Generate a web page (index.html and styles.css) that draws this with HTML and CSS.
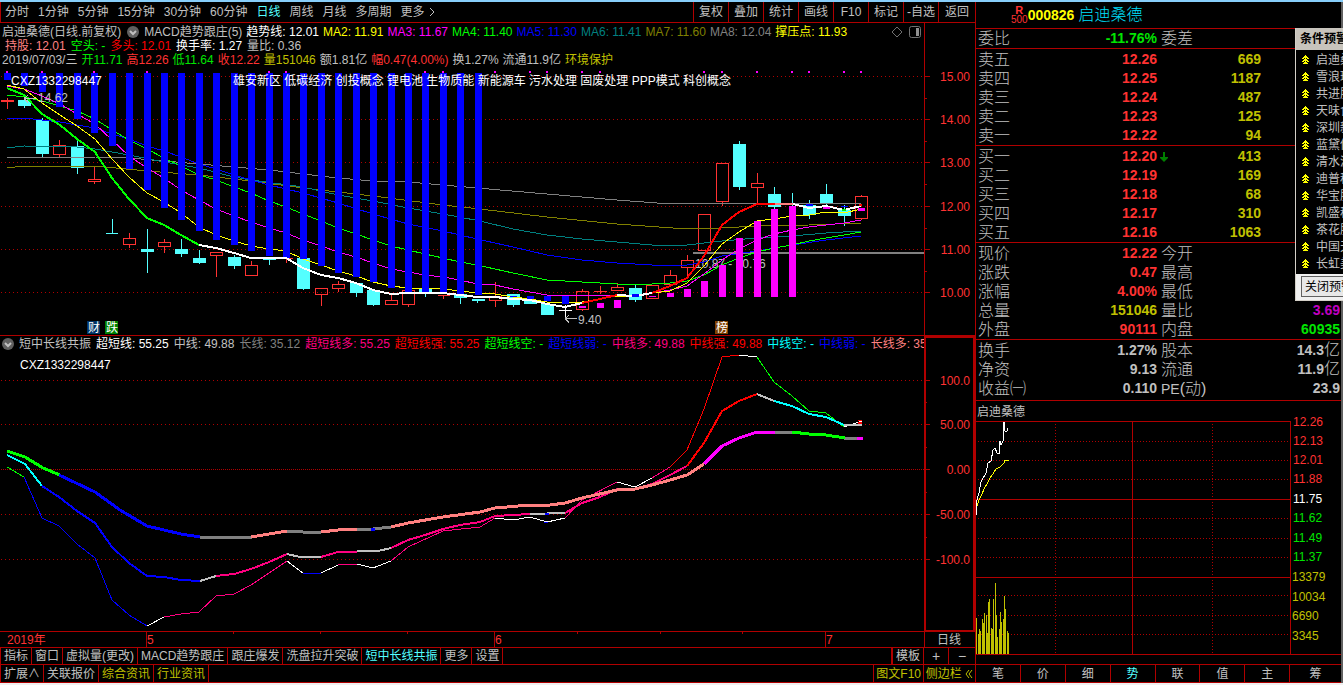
FILE: index.html
```html
<!DOCTYPE html>
<html lang="zh-CN">
<head>
<meta charset="utf-8">
<title>启迪桑德 000826 日线</title>
<link rel="stylesheet" href="styles.css">
</head>
<body>
<div class="app">
  <main class="chart-side">
    <nav class="toolbar">
      <div class="periods">
        <button>分时</button><button>1分钟</button><button>5分钟</button><button>15分钟</button><button>30分钟</button><button>60分钟</button><button class="active">日线</button><button>周线</button><button>月线</button><button>多周期</button><button>更多 <svg class="chev" viewBox="0 0 6 10"><path d="M1 1l4 4l-4 4"/></svg></button>
      </div>
      <div class="tools">
        <button>复权</button><button>叠加</button><button>统计</button><button>画线</button><button>F10</button><button>标记</button><button>-自选</button><button>返回</button>
      </div>
    </nav>

    <section class="panel upper">
      <div class="legend-wrap">
        <div class="legend">
          <div class="row">
            <span>启迪桑德(日线.前复权)</span>
            <svg class="drop" viewBox="0 0 12 12"><circle cx="6" cy="6" r="6"/><path d="M3 5l3 3l3-3"/></svg>
            <span>MACD趋势跟庄(5)</span>
            <span class="white">趋势线: 12.01</span><span class="yellow">MA2: 11.91</span><span class="magenta">MA3: 11.67</span><span class="green">MA4: 11.40</span><span class="blue">MA5: 11.30</span><span class="teal">MA6: 11.41</span><span class="olive">MA7: 11.60</span><span class="dim">MA8: 12.04</span><span class="yellow">撑压点: 11.93</span>
            <span class="corner">
              <svg viewBox="0 0 12 12"><path d="M6 1l5 5l-5 5l-5-5z"/></svg>
              <svg viewBox="0 0 12 12"><rect x=".5" y=".5" width="11" height="11" rx="2"/><rect class="solid" x="7" y="2" width="3" height="8"/></svg>
            </span>
          </div>
          <div class="row indent">
            <span class="salmon">持股: 12.01</span><span class="green">空头: -</span><span class="pure-red">多头: 12.01</span><span class="white">换手率: 1.27</span><span>量比: 0.36</span>
          </div>
          <div class="row">
            <span>2019/07/03/三</span><span class="up-green">开11.71</span><span class="red">高12.26</span><span class="up-green">低11.64</span><span class="red">收12.22</span><span class="gold">量151046</span><span>额1.81亿</span><span class="red">幅0.47(4.00%)</span><span>换1.27%</span><span>流通11.9亿</span><span class="gold">环境保护</span>
          </div>
        </div>
        <div class="gutter"></div>
      </div>
      <svg class="plot" viewBox="0 68 975 267" role="img" aria-label="日线K线图">
        <path class="grid" d="M1 76.5H924M1 119.5H924M1 162.5H924M1 206.5H924M1 249.5H924M1 292.5H924"/>
        <path class="axis" d="M924.5 68V335M925 76.5h5M925 119.5h5M925 162.5h5M925 206.5h5M925 249.5h5M925 292.5h5M925 98.5h2M925 141.5h2M925 184.5h2M925 228.5h2M925 271.5h2"/>
        <g class="t-red end"><text x="970" y="81">15.00</text><text x="970" y="124">14.00</text><text x="970" y="167">13.00</text><text x="970" y="211">12.00</text><text x="970" y="254">11.00</text><text x="970" y="297">10.00</text></g>
        <path class="s2 dim" d="M693 253H924"/>
        <text class="t-gray" x="695" y="268">10.87 - 10.76</text>
        <g class="candle-up">
          <path class="thick" d="M1 101h13"/>
          <path d="M7.500 98v11M59.500 140v5M59.500 155v2M94.500 167v12M94.500 182v2M129.500 233v5M129.500 245v3M164.500 239v3M164.500 247v6M216.500 256v21M251.500 261v4M286.500 259v4M321.500 295v11M338.500 281v3M338.500 289v3M391.500 295v5M408.500 305v2M443.500 296v3M495.500 282v14M495.500 301v6M582.500 289v2M582.500 309v2M594 291.500h13M600.500 286v8M617.500 283v4M670.500 270v5M687.500 255v5M687.500 267v10M722.500 201v5M757.500 173v10M757.500 187v17M861.500 195v1M861.500 218v2"/>
          <path d="M53.500 145.500h12v9h-12zM88.500 179.500h12v2h-12zM123.500 238.500h12v6h-12zM158.500 242.500h12v4h-12zM210.500 252.500h12v3h-12zM245.500 265.500h12v10h-12zM280.500 258.500h12M315.500 288.500h12v6h-12zM332.500 284.500h12v4h-12zM385.500 300.500h12v4h-12zM402.500 290.500h12v14h-12zM437.500 295.500h12M489.500 296.500h12v4h-12zM576.500 291.500h12v18h-12zM611.500 287.500h12v3h-12zM646.500 285.500h12v13h-12zM664.500 275.500h12v9h-12zM681.500 260.500h12v7h-12zM698.500 214.500h12v36h-12zM716.500 163.500h12v38h-12zM751.500 183.500h12v4h-12zM855.500 196.500h12v22h-12z"/>
        </g>
        <path class="candle-down" d="M18 100h13v6h-13zM24 97h1v11h-1zM36 120h13v34h-13zM42 118h1v39h-1zM71 146h13v22h-13zM77 141h1v33h-1zM106 233h12v1h-12zM112 219h1v14h-1zM141 249h13v3h-13zM147 229h1v44h-1zM175 249h13v5h-13zM181 239h1v18h-1zM193 258h13v5h-13zM199 250h1v14h-1zM228 257h13v9h-13zM234 255h1v14h-1zM263 258h13v2h-13zM269 258h1v7h-1zM297 258h13v31h-13zM303 258h1v32h-1zM350 283h13v10h-13zM356 283h1v14h-1zM367 290h13v15h-13zM373 290h1v16h-1zM419 289h13v5h-13zM425 289h1v8h-1zM454 294h13v4h-13zM460 294h1v10h-1zM472 299h13v2h-13zM477 299h1v4h-1zM507 294h13v11h-13zM513 294h1v13h-1zM524 300h13v4h-13zM541 304h13v11h-13zM629 288h13v12h-13zM635 285h1v17h-1zM733 144h13v43h-13zM739 141h1v49h-1zM768 194h13v13h-13zM774 187h1v22h-1zM792 193h1v14h-1zM803 205h13v10h-13zM809 200h1v19h-1zM820 194h13v9h-13zM826 184h1v22h-1zM838 210h13v6h-13zM844 205h1v21h-1z"/>
        <path class="s1 white" d="M565.500 305v15M559 310.500h13"/>
        <polyline class="s1 dim" points="7,158 24,157 95,157 129,158 199,164 269,170 338,178 373,181 408,182 477,188 547,194 617,200 670,204 757,203 861,204"/>
        <polyline class="s1 olive" points="7,168 24,166 95,166 147,171 199,175 251,181 303,188 373,196 443,205 480,209 547,217 617,224 687,229 722,228 757,226 809,225 861,223"/>
        <polyline class="s1 teal" points="7,148 24,146 77,147 95,149 129,155 164,162 199,168 234,177 251,180 303,187 338,195 373,201 408,208 443,214 480,221 513,229 547,235 582,239 617,242 652,245 687,245 722,241 757,238 792,236 826,233 861,231"/>
        <polyline class="s1 blue" points="7,118 24,118 42,120 60,122 77,125 95,128 112,134 129,139 147,146 164,151 181,157 199,164 216,169 234,175 251,180 269,185 303,193 338,203 373,214 408,224 443,231 477,239 513,247 547,255 582,260 617,263 652,265 687,265 704,262 722,256 757,251 792,245 826,240 861,236"/>
        <polyline class="s1 green" points="7,95 24,97 42,101 60,106 77,111 95,119 112,130 129,140 147,149 164,158 181,166 199,175 216,180 234,187 251,193 269,201 286,207 303,214 321,221 338,228 356,234 373,240 391,246 408,250 425,254 443,258 460,262 477,265 495,269 513,273 547,280 582,282 617,284 652,284 670,283 687,281 704,275 722,265 739,258 757,252 774,248 792,245 809,241 826,238 844,235 861,232"/>
        <polyline class="s1 magenta" points="7,86 24,89 42,96 60,104 77,114 95,124 112,140 129,156 147,168 164,178 181,190 199,200 216,209 234,216 251,222 269,228 286,233 303,240 321,246 338,252 356,257 373,263 391,269 408,272 425,275 443,277 460,280 477,284 495,285 513,289 530,292 547,295 582,295 617,295 635,295 652,293 670,290 687,286 704,274 722,260 739,249 757,240 774,234 792,230 809,227 826,225 844,223 861,220"/>
        <polyline class="s1 yellow" points="7,85 24,89 42,103 60,115 77,126 95,139 112,159 129,177 147,193 164,202 181,213 199,227 216,235 234,241 251,246 269,249 286,251 303,259 321,265 338,271 356,276 373,282 391,286 408,288 425,288 443,289 460,291 477,293 495,294 513,297 530,299 547,302 565,303 582,302 600,299 617,296 635,296 652,293 670,291 687,283 704,266 722,244 739,232 757,221 774,219 792,216 809,215 826,212 844,213 861,209"/>
        <path class="bar-blue" d="M4 73h7v7h-7zM21 73h7v13h-7zM39 73h7v19h-7zM56 73h7v34h-7zM74 73h7v46h-7zM91 73h7v60h-7zM109 73h7v73h-7zM126 73h7v96h-7zM144 73h7v117h-7zM161 73h7v135h-7zM178 73h7v147h-7zM196 73h7v158h-7zM213 73h7v167h-7zM231 73h7v172h-7zM248 73h7v178h-7zM266 73h7v183h-7zM283 73h7v185h-7zM300 73h7v186h-7zM318 73h7v193h-7zM335 73h7v200h-7zM353 73h7v204h-7zM370 73h7v209h-7zM388 73h7v215h-7zM405 73h7v219h-7zM422 73h7v220h-7zM440 73h7v221h-7zM457 73h7v221h-7zM475 73h7v222h-7zM510 296h7v1h-7zM527 296h7v3h-7zM544 296h7v5h-7zM562 296h7v8h-7z"/>
        <path class="bar-magenta" d="M492 296h7v2h-7zM579 306h7v2h-7zM597 303h7v5h-7zM614 300h7v8h-7zM649 296h7v1h-7zM667 293h7v4h-7zM684 289h7v8h-7zM701 281h7v16h-7zM719 265h7v32h-7zM736 238h7v59h-7zM754 221h7v76h-7zM771 209h7v88h-7zM789 206h7v91h-7z"/>
        <path class="bar-magenta" d="M6 71h2v2h-2zM41 71h2v2h-2zM93 71h2v2h-2zM146 71h2v2h-2zM268 71h2v2h-2zM285 71h2v2h-2zM424 71h2v2h-2zM442 71h2v2h-2zM494 71h2v2h-2zM529 71h2v2h-2zM546 71h2v2h-2zM581 71h2v2h-2zM599 71h2v2h-2zM703 71h2v2h-2zM721 71h2v2h-2zM756 71h2v2h-2zM791 71h2v2h-2zM808 71h2v2h-2zM843 71h2v2h-2zM860 71h2v2h-2z"/>
        <polyline class="s2 green" points="7,88 24,95 42,114 60,125 77,139 95,152 112,178 129,199 147,218 164,225 181,235 199,245"/>
        <polyline class="s2 white" points="199,245 216,248 234,253 251,258 286,258 303,268 321,275 338,278 356,283 373,290 391,294 408,293 443,293 460,295 477,297 495,297 513,299 530,300 547,304 565,307 582,303"/>
        <polyline class="s2 pure-red" points="582,303 600,299 617,295"/>
        <polyline class="s2 white" points="617,295 635,296 652,293"/>
        <polyline class="s2 pure-red" points="652,293 670,286 687,278 704,256 722,225 739,212 757,204 775,204"/>
        <path class="s2 salmon" d="M775 204H793"/>
        <polyline class="s2 white" points="793,204 809,208 826,206 844,210 861,206"/>
        <path class="bar-blue" d="M632 294h7v3h-7zM806 204h7v2h-7zM841 206h7v1h-7z"/>
        <path class="bar-magenta" d="M823 207h7v2h-7zM858 208h7v3h-7z"/>
        <path class="fill-green" d="M842 209h4v2h-4z"/><path class="fill-red" d="M859 204h3v2h-3z"/>
        <text class="t-white" x="11" y="85">CXZ1332298447</text>
        <path class="s1 gray" d="M24 98.500h12M24 98.500l4-3M24 98.500l4 4"/>
        <text class="t-gray" x="38" y="102">14.62</text>
        <text class="t-white" x="233" y="85">雄安新区 低碳经济 创投概念 锂电池 生物质能 新能源车 污水处理 固废处理 PPP模式 科创概念</text>
        <path class="s1 gray" d="M565 318.500h12M565 318.500l4-3M565 318.500l4 4"/>
        <text class="t-gray" x="578" y="324">9.40</text>
        <rect x="87" y="321" width="13" height="13" fill="#036"/><rect x="105" y="321" width="13" height="13" fill="#008000"/><rect x="715" y="321" width="13" height="13" fill="#804000"/>
        <g class="t-white"><text x="88" y="332">财</text><text x="106" y="332">跌</text><text x="716" y="332">榜</text></g>
      </svg>
    </section>

    <section class="panel lower">
      <div class="legend-wrap">
        <div class="legend one">
          <div class="row wide">
            <svg class="drop" viewBox="0 0 12 12"><circle cx="6" cy="6" r="6"/><path d="M3 5l3 3l3-3"/></svg>
            <span>短中长线共振</span><span class="white">超短线: 55.25</span><span>中线: 49.88</span><span class="dim">长线: 35.12</span><span class="rose">超短线多: 55.25</span><span class="pure-red">超短线强: 55.25</span><span class="green">超短线空: -</span><span class="blue">超短线弱: -</span><span class="rose">中线多: 49.88</span><span class="pure-red">中线强: 49.88</span><span class="aqua">中线空: -</span><span class="blue">中线弱: -</span><span class="salmon">长线多: 35</span>
          </div>
        </div>
        <div class="gutter selected"></div>
      </div>
      <svg class="plot" viewBox="0 352 975 295" role="img" aria-label="短中长线共振指标图">
        <path class="grid" d="M1 380.500H924M1 424.500H924M1 514.500H924M1 559.500H924"/>
        <path class="grid dense" d="M1 469.500H924"/>
        <path class="axis" d="M925 380.500h5M925 424.500h5M925 469.500h5M925 514.500h5M925 559.500h5M925 402.500h2M925 447.500h2M925 492.500h2M925 537.500h2M0 631.500H924M146.500 631V647M494.500 631V647M825.500 631V647M924.500 631V647M233.500 631v3M320.500 631v3M407.500 631v3M577.500 631v3M660.500 631v3M742.500 631v3"/>
        <path class="axis box" d="M925 352V631H975M974 631V352"/>
        <g class="t-red end"><text x="970" y="385">100.0</text><text x="970" y="429">50.00</text><text x="970" y="474">0.00</text><text x="970" y="519">-50.00</text><text x="970" y="564">-100.0</text></g>
        <g class="t-red"><text x="7" y="644">2019年</text><text x="147" y="644">5</text><text x="495" y="644">6</text><text x="826" y="644">7</text></g>
        <text class="t-gray" x="937" y="644">日线</text>
        <text class="t-white" x="20" y="369">CXZ1332298447</text>

        <polyline class="s1 green" points="7,467 24,477"/>
        <polyline class="s1 blue" points="24,477 42,518 59,526 77,544 95,558 112,600 129,615 147,626"/>
        <polyline class="s1 white" points="147,626 164,617"/>
        <polyline class="s1 rose" points="164,617 181,614 199,612 216,596 234,594 251,585 287,561"/>
        <polyline class="s1 white" points="287,561 303,573"/>
        <polyline class="s1 blue" points="303,573 321,573"/>
        <polyline class="s1 white" points="321,573 338,565"/>
        <polyline class="s1 rose" points="338,565 357,564"/>
        <polyline class="s1 white" points="357,564 373,568 391,561"/>
        <polyline class="s1 rose" points="391,561 408,547 443,531 480,527 495,518"/>
        <polyline class="s1 white" points="495,518 513,520 530,517 547,522 565,518"/>
        <polyline class="s1 rose" points="565,518 582,500 617,482"/>
        <polyline class="s1 white" points="617,482 635,487 652,478"/>
        <polyline class="s1 rose" points="652,478 670,467"/>
        <polyline class="s1 pure-red" points="670,467 687,450 704,409 722,357 739,355"/>
        <polyline class="s1 white" points="739,355 757,357"/>
        <polyline class="s1 green" points="757,357 774,382 792,396 809,411 826,413 844,427"/>
        <polyline class="s1 white" points="844,427 862,421"/>

        <polyline class="s2 aqua" points="7,455 25,464 42,486"/>
        <polyline class="s2 blue" points="42,486 59,497 77,511 95,523 112,547 129,563 147,576 164,577 181,580 200,581"/>
        <polyline class="s2 gray" points="200,581 216,576"/>
        <polyline class="s2 rose" points="216,576 234,574 251,569 269,562 287,554"/>
        <polyline class="s2 gray" points="287,554 300,557 321,557"/>
        <polyline class="s2 rose" points="321,557 338,552 357,552"/>
        <polyline class="s2 gray" points="357,551 378,551 391,548"/>
        <polyline class="s2 rose" points="391,548 408,540 425,535 443,529 460,525 480,522 495,516 513,515 530,514"/>
        <polyline class="s2 gray" points="530,514 565,513"/>
        <polyline class="s2 rose" points="565,513 582,503 600,497 617,489 635,489 652,484 670,475 687,466"/>
        <polyline class="s2 pure-red" points="687,466 704,443 722,411 739,401 757,394"/>
        <polyline class="s2 gray" points="757,394 774,401"/>
        <polyline class="s2 aqua" points="774,401 792,406 809,414 826,417 844,425"/>
        <polyline class="s2 gray" points="844,425 862,425"/>

        <polyline class="s3 green" points="7,451 25,457 43,468 60,475"/>
        <polyline class="s3 blue" points="59,475 95,492 120,510 147,526 181,534 200,537"/>
        <polyline class="s3 dim" points="200,537 225,537 234,538 252,537"/>
        <polyline class="s3 salmon" points="251,537 269,534 287,531"/>
        <polyline class="s3 dim" points="287,531 303,532 321,532"/>
        <polyline class="s3 salmon" points="321,532 338,530 357,529"/>
        <polyline class="s3 dim" points="357,529 373,529 391,527"/>
        <polyline class="s3 salmon" points="391,527 408,523 443,517 480,512 495,508 530,505 550,505 565,503 582,498 617,490 635,489 652,485 670,480 687,475 704,464"/>
        <polyline class="s3 magenta" points="704,464 722,446 739,438 757,432 775,432"/>
        <path class="s3 dim" d="M775 432H792M844 438H858"/>
        <polyline class="s3 green" points="792,432 809,434 826,435 845,438"/>
        <path class="s3 magenta" d="M857 438H863"/>
        <path class="bar-blue" d="M371 528h4v3h-4zM545 513h4v2h-4zM544 522h4v1h-4z"/>
        <path class="fill-red" d="M858 420h4v1h-4zM858 422h4v2h-4z"/>
      </svg>
    </section>

    <nav class="tabs">
      <button>指标</button><button>窗口</button><button>虚拟量(更改)</button><button>MACD趋势跟庄</button><button>跟庄爆发</button><button>洗盘拉升突破</button><button class="active">短中长线共振</button><button>更多</button><button>设置</button>
      <span class="space"></span>
      <button class="template">模板</button><button class="zoom" aria-label="放大">+</button><button class="zoom" aria-label="缩小">−</button>
    </nav>
    <nav class="tabs bottom">
      <button>扩展∧</button><button>关联报价</button><button class="gold">综合资讯</button><button class="gold">行业资讯</button>
      <span class="space"></span>
      <button class="gold f10">图文F10</button><button class="gold sidebar">侧边栏 <svg class="chev" viewBox="0 0 8 10"><path d="M4 1l-3 4l3 4M7 1l-3 4l3 4"/></svg></button>
    </nav>
  </main>

  <aside class="quote">
    <header class="stock">
      <div class="badge-r"><b>R</b><span>500</span></div>
      <b class="code">000826</b>
      <span class="name">启迪桑德</span>
    </header>
    <table class="book head">
      <tr><th>委比</th><td class="up-green">-11.76%</td><th class="second">委差</th><td></td></tr>
    </table>
    <table class="book">
      <tr><th>卖五</th><td class="red">12.26</td><td class="mark"></td><td class="gold">669</td></tr>
      <tr><th>卖四</th><td class="red">12.25</td><td></td><td class="gold">1187</td></tr>
      <tr><th>卖三</th><td class="red">12.24</td><td></td><td class="gold">487</td></tr>
      <tr><th>卖二</th><td class="red">12.23</td><td></td><td class="gold">125</td></tr>
      <tr><th>卖一</th><td class="red">12.22</td><td></td><td class="gold">94</td></tr>
    </table>
    <table class="book">
      <tr><th>买一</th><td class="red">12.20</td><td class="mark"><svg viewBox="0 0 8 10"><path d="M3 0h2v5h3v1l-4 4l-4-4v-1h3z"/></svg></td><td class="gold">413</td></tr>
      <tr><th>买二</th><td class="red">12.19</td><td></td><td class="gold">169</td></tr>
      <tr><th>买三</th><td class="red">12.18</td><td></td><td class="gold">68</td></tr>
      <tr><th>买四</th><td class="red">12.17</td><td></td><td class="gold">310</td></tr>
      <tr><th>买五</th><td class="red">12.16</td><td></td><td class="gold">1063</td></tr>
    </table>
    <table class="book stats">
      <tr><th>现价</th><td class="red">12.22</td><th class="second">今开</th><td></td></tr>
      <tr><th>涨跌</th><td class="red">0.47</td><th class="second">最高</th><td></td></tr>
      <tr><th>涨幅</th><td class="red">4.00%</td><th class="second">最低</th><td></td></tr>
      <tr><th>总量</th><td class="gold">151046</td><th class="second">量比</th><td class="purple">3.69</td></tr>
      <tr><th>外盘</th><td class="red">90111</td><th class="second">内盘</th><td class="up-green">60935</td></tr>
    </table>
    <table class="book stats last">
      <tr><th>换手</th><td>1.27%</td><th class="second">股本</th><td>14.3<span>亿</span></td></tr>
      <tr><th>净资</th><td>9.13</td><th class="second">流通</th><td>11.9<span>亿</span></td></tr>
      <tr><th>收益㈠</th><td>0.110</td><th class="second"><b>PE</b>(动)</th><td>23.9</td></tr>
    </table>

    <svg class="plot mini" viewBox="976 401 365 263" role="img" aria-label="启迪桑德分时走势">
      <text class="t-gray" x="977" y="416">启迪桑德</text>
      <path class="grid mid" d="M978 441.500H1290M978 460.500H1290M978 479.500H1290M978 518.500H1290M978 538.500H1290M978 557.500H1290M978 595.500H1290M978 615.500H1290M978 634.500H1290M1055.500 424V654M1212.500 424V654"/>
      <path class="axis" d="M976 421.500H1290.500V654M976 499.500H1290M976 577.500H1290M976 654.500H1341M1132.500 421V654"/>
      <g class="t-red"><text x="1293" y="426">12.26</text><text x="1293" y="445">12.13</text><text x="1293" y="464">12.01</text><text x="1293" y="483">11.88</text></g>
      <text class="t-white" x="1293" y="503">11.75</text>
      <g class="t-green"><text x="1293" y="522">11.62</text><text x="1293" y="542">11.49</text><text x="1293" y="561">11.37</text></g>
      <g class="t-gold"><text x="1292" y="581">13379</text><text x="1292" y="601">10034</text><text x="1292" y="620">6690</text><text x="1292" y="640">3345</text></g>
      <polyline class="s1 yellow" points="976,509 979,500 982,494 984,489 987,484 990,478 993,474 996,469 1000,467 1004,463 1005,460 1009,460"/>
      <polyline class="s1 white" points="976,515 977,500 979,493 981,482 986,473 988,463 991,461 993,450 995,448 997,453 999,454 1000,441 1001,445 1003,441 1004,422 1005,431 1007,431 1008,428"/>
      <path class="volume" d="M976.500 654V618M978.500 654V634M979.500 654V629M980.500 654V631M982.500 654V619M983.500 654V623M984.500 654V613M986.500 654V615M987.500 654V633M988.500 654V602M989.500 654V599M991.500 654V628M992.500 654V629M993.500 654V599M995.500 654V583M996.500 654V615M997.500 654V637M999.500 654V629M1000.500 654V612M1001.500 654V622M1003.500 654V619M1004.500 654V596M1005.500 654V609M1007.500 654V631M1008.500 654V633"/>
    </svg>
    <nav class="side-tabs">
      <button>笔</button><button>价</button><button>细</button><button class="active">势</button><button>联</button><button>值</button><button>主</button><button class="wide">筹</button>
    </nav>
  </aside>

  <section class="alerts">
    <h2>条件预警</h2>
    <ul>
      <li><svg viewBox="0 0 7 9"><use href="#up2"/></svg>启迪桑德</li>
      <li><svg viewBox="0 0 7 9"><use href="#up2"/></svg>雪浪环境</li>
      <li><svg viewBox="0 0 7 9"><use href="#up2"/></svg>共进股份</li>
      <li><svg viewBox="0 0 7 9"><use href="#up2"/></svg>天味食品</li>
      <li><svg viewBox="0 0 7 9"><use href="#up2"/></svg>深圳新星</li>
      <li><svg viewBox="0 0 7 9"><use href="#up2"/></svg>蓝黛传动</li>
      <li><svg viewBox="0 0 7 9"><use href="#up2"/></svg>清水源</li>
      <li><svg viewBox="0 0 7 9"><use href="#up2"/></svg>迪普科技</li>
      <li><svg viewBox="0 0 7 9"><use href="#up2"/></svg>华宝股份</li>
      <li><svg viewBox="0 0 7 9"><use href="#up2"/></svg>凯盛科技</li>
      <li><svg viewBox="0 0 7 9"><use href="#up2"/></svg>茶花股份</li>
      <li><svg viewBox="0 0 7 9"><use href="#up2"/></svg>中国天楹</li>
      <li><svg viewBox="0 0 7 9"><use href="#up2"/></svg>长虹美菱</li>
    </ul>
    <div class="foot"><button>关闭预警</button></div>
  </section>
</div>
<svg class="defs" aria-hidden="true"><symbol id="up2" viewBox="0 0 7 9"><path d="M3 0h1v1h-1zM2 1h3v1h-3zM1 2h5v1h-5zM0 3h2v1h-2zM3 3h1v1h-1zM5 3h2v1h-2zM2 4h3v1h-3zM1 5h5v1h-5zM0 6h2v1h-2zM3 6h1v1h-1zM5 6h2v1h-2zM2 7h3v1h-3zM1 8h5v1h-5z"/></symbol></svg>
</body>
</html>
```

FILE: styles.css
```css
* { box-sizing: border-box; }

body {
  margin: 0;
  background: #000;
  color: #c0c0c0;
  font: 12px/14px "Liberation Sans", "Noto Sans CJK SC", sans-serif;
}

button {
  margin: 0;
  padding: 0;
  border: 0;
  background: none;
  color: inherit;
  font: inherit;
  white-space: nowrap;
  cursor: pointer;
}

.defs { position: absolute; width: 0; height: 0; }

.app {
  position: relative;
  display: flex;
  align-items: stretch;
  overflow: hidden;
  border-top: 2px solid #87cefa;
  border-bottom: 2px solid #f0f0f0;
}

.chart-side { flex: 1; min-width: 0; }

/* colours shared by legend text and chart lines */
.white { color: #fff; stroke: #fff; }
.gray { stroke: #c0c0c0; }
.yellow { color: #ff0; stroke: #ff0; }
.magenta { color: #f0f; stroke: #f0f; }
.green { color: #0f0; stroke: #0f0; }
.up-green { color: #00e600; }
.blue { color: #00f; stroke: #00f; }
.teal { color: #008080; stroke: #008080; }
.olive { color: #808000; stroke: #808000; }
.dim { color: #808080; stroke: #808080; }
.salmon { color: #ff8080; stroke: #ff8080; }
.rose { color: #ff0080; stroke: #ff0080; }
.pure-red { color: #f00; stroke: #f00; }
.aqua { color: #0ff; stroke: #0ff; }
.red { color: #ff3232; }
.gold { color: #c0c000; }
.purple { color: #c000c0; }
.active { color: #54ffff; }

/* toolbar */
.toolbar {
  display: flex;
  justify-content: space-between;
  height: 21px;
  border-bottom: 1px solid #b00000;
  border-left: 1px solid #b00000;
}
.periods { display: flex; gap: 9px; padding-left: 4px; }
.tools { display: flex; }
.tools button { width: 35px; border-left: 1px solid #b00000; }
.tools button:last-child { width: 37px; }

.chev {
  width: 8px;
  height: 10px;
  vertical-align: -1px;
  fill: none;
  stroke: currentColor;
}

/* chart panels */
.legend-wrap { display: flex; }
.legend {
  flex: 1;
  min-width: 0;
  overflow: hidden;
  padding: 2px 0 1px;
}
.legend.one { padding: 1px 0; }
.row {
  display: flex;
  align-items: center;
  gap: 4px;
  height: 14px;
  padding-left: 2px;
  white-space: nowrap;
}
.row.indent { gap: 5px; padding-left: 5px; }
.row.wide { gap: 5px; }
.row span { flex: none; }
.gutter { width: 51px; border-left: 1px solid #b00000; }
.gutter.selected { border: 2px solid #b00000; border-width: 2px 2px 0; }
.drop { flex: none; width: 12px; height: 12px; fill: #606060; }
.upper .drop { margin: 0 1px 0 2px; }
.drop path { fill: none; stroke: #c0c0c0; stroke-width: 2; }
.row .corner { display: flex; gap: 6px; margin-left: auto; margin-right: 3px; }
.corner svg { width: 12px; height: 12px; fill: none; stroke: #707070; }
.corner .solid { fill: #909090; stroke: none; }

.lower { border-top: 1px solid #b00000; }

.plot {
  display: block;
  width: 100%;
  height: auto;
  shape-rendering: crispEdges;
}
.plot polyline { fill: none; }
.s1 { fill: none; stroke-width: 1; }
.s2 { fill: none; stroke-width: 2; }
.s3 { fill: none; stroke-width: 3; }
.grid { stroke: #b00000; stroke-dasharray: 1 3; }
.grid.dense { stroke-dasharray: 1 1; }
.grid.mid { stroke-dasharray: 1 2; }
.axis { fill: none; stroke: #b00000; }
.axis.box { stroke-width: 2; }
.candle-up { fill: none; stroke: #ff3232; }
.candle-up .thick { stroke-width: 2; }
.candle-down { fill: #54ffff; }
.bar-blue { fill: #00f; }
.bar-magenta { fill: #f0f; }
.fill-green { fill: #0f0; }
.fill-red { fill: #f00; }
.volume { stroke: #c0c000; }
.t-red { fill: #ff3232; }
.t-gray { fill: #c0c0c0; }
.t-white { fill: #fff; }
.t-green { fill: #00e600; }
.t-gold { fill: #c0c000; }
.end { text-anchor: end; }

/* indicator tabs */
.tabs {
  display: flex;
  height: 17px;
  border-top: 1px solid #b00000;
  border-left: 1px solid #b00000;
}
.tabs button { padding: 0 3px; border-right: 1px solid #b00000; }
.tabs .space { flex: 1; }
.tabs .template { width: 33px; border-left: 2px solid #b00000; }
.tabs .zoom { width: 25px; font-size: 14px; }
.tabs .zoom:last-child { border-right: 0; width: 26px; }
.tabs.bottom { height: 19px; border-bottom: 1px solid #b00000; }
.tabs.bottom .f10 { padding: 0 2px; border-left: 1px solid #b00000; }
.tabs.bottom .sidebar { width: 51px; padding: 0 1px; border-right: 0; }

/* quote panel */
.quote {
  flex: none;
  display: flex;
  flex-direction: column;
  width: 368px;
  border-left: 1px solid #b00000;
  border-right: 2px solid #606060;
}
.stock {
  display: flex;
  align-items: center;
  gap: 2px;
  height: 26px;
  padding-left: 35px;
}
.badge-r {
  display: grid;
  justify-items: center;
  color: #ff3232;
  font-size: 10px;
  line-height: 10px;
}
.badge-r b { font-size: 11px; }
.code { margin-left: -2px; color: #ff0; font-size: 14px; }
.name { margin-left: 2px; color: #00e0ff; font-size: 16px; font-weight: 300; }

.book {
  width: 100%;
  table-layout: fixed;
  border-collapse: separate;
  border-spacing: 0;
  padding: 1px 0 0;
  border-top: 1px solid #b00000;
}
.book.head { padding: 0; }
.book.last { padding-bottom: 2px; border-bottom: 1px solid #b00000; }
.book tr { height: 19px; }
.book th, .book td { padding: 0; line-height: 19px; white-space: nowrap; }
.book th {
  width: 60px;
  padding-left: 2px;
  text-align: left;
  font-size: 16px;
  font-weight: 300;
}
.book th b { font-size: 14px; line-height: 1; }
.book td { text-align: right; font-size: 14px; font-weight: bold; }
.book td:nth-child(2) { width: 121px; }
.book td:nth-child(3) { width: 20px; }
.book td:nth-child(4) { padding-right: 80px; }
.book.stats td:nth-child(4) { padding-right: 1px; }
.book td span { font-size: 16px; font-weight: 300; line-height: 1; }
.book .second { padding-left: 4px; }
.book .mark { padding-left: 3px; text-align: left; }
.mark svg { display: block; width: 8px; height: 10px; fill: #008000; }

.side-tabs {
  display: flex;
  height: 19px;
  border-top: 1px solid #b00000;
  border-bottom: 1px solid #b00000;
}
.side-tabs button { flex: 45; border-right: 1px solid #b00000; }
.side-tabs .wide { flex: 52; border-right: 0; }

/* floating alert window, runs past the right edge of the screen */
.alerts {
  position: absolute;
  top: 26px;
  right: 0;
  width: 48px;
  overflow: hidden;
  border-left: 1px solid #d4d0c8;
  border-bottom: 1px solid #d4d0c8;
  background: #000;
  white-space: nowrap;
}
.alerts h2 {
  margin: 0;
  padding-left: 4px;
  background: #c8c4bc;
  color: #000;
  font-size: 12px;
  line-height: 22px;
}
.alerts ul { margin: 0; padding: 1px 0 2px; list-style: none; }
.alerts li { display: flex; align-items: center; gap: 7px; height: 17px; padding-left: 6px; }
.alerts li svg { flex: none; width: 7px; height: 9px; fill: #ff0; shape-rendering: crispEdges; }
.alerts .foot { padding: 2px 0 3px 5px; background: #f0f0f0; }
.alerts .foot button {
  width: 70px;
  height: 21px;
  padding-left: 3px;
  border: 1px solid #606060;
  background: #e8e8e8;
  color: #000;
  text-align: left;
}
```
